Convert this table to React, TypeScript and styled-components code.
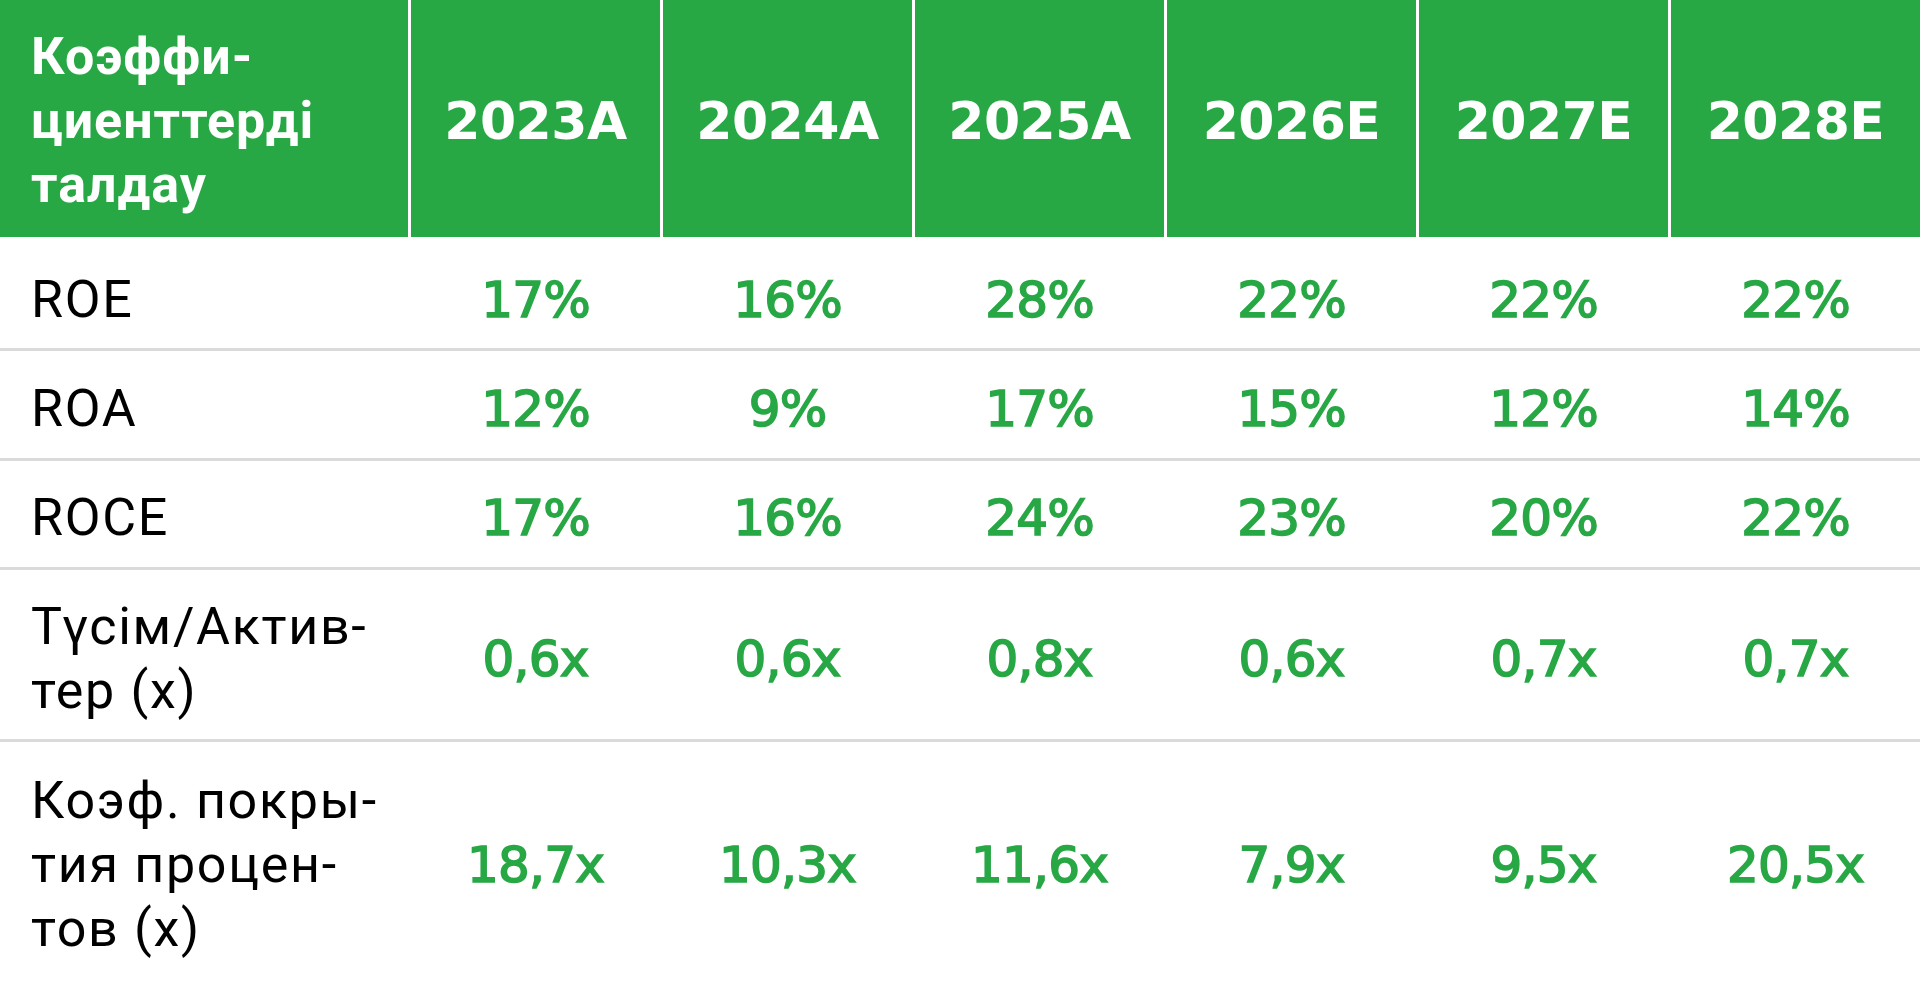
import React from "react";
import styled, { createGlobalStyle } from "styled-components";

const GlobalStyle = createGlobalStyle`
  html, body {
    margin: 0;
    padding: 0;
    background: #ffffff;
  }
  body {
    width: 1920px;
    height: 983px;
    overflow: hidden;
    font-family: "Roboto", "Liberation Sans", sans-serif;
  }
  * { box-sizing: border-box; }
`;

const GREEN = "#28a745";

const Table = styled.div`
  width: 1920px;
  display: flex;
  flex-direction: column;
`;

const Grid = styled.div<{ $h: number; $shift?: number; $line?: boolean }>`
  display: grid;
  grid-template-columns: 408px repeat(6, 1fr);
  column-gap: 3px;
  height: ${(p) => p.$h}px;
  padding-top: ${(p) => p.$shift ?? 0}px;
  border-bottom: ${(p) => (p.$line ? "3px solid #dadada" : "none")};
  align-items: center;
`;

const HeaderRow = styled(Grid)`
  background: #ffffff;
  align-items: stretch;
`;

const HeadCell = styled.div<{ $first?: boolean }>`
  background: ${GREEN};
  color: #ffffff;
  display: flex;
  align-items: center;
  justify-content: ${(p) => (p.$first ? "flex-start" : "center")};
  padding: 5px 0 0 ${(p) => (p.$first ? "31px" : "0")};
`;

const HeadTitle = styled.div`
  font-family: "Roboto", "Liberation Sans", sans-serif;
  font-weight: 700;
  font-size: 52px;
  line-height: 64px;
  letter-spacing: 1px;
`;

const Year = styled.div`
  font-family: "DejaVu Sans", sans-serif;
  font-weight: 700;
  font-size: 52px;
  letter-spacing: -0.5px;
  line-height: 1;
`;

const Label = styled.div`
  padding-left: 31px;
  font-family: "Roboto", "Liberation Sans", sans-serif;
  font-weight: 400;
  font-size: 52px;
  line-height: 64px;
  letter-spacing: 1.7px;
  color: #000000;
`;

const Value = styled.div`
  text-align: center;
  font-family: "DejaVu Sans", sans-serif;
  font-weight: 400;
  font-size: 50px;
  line-height: 64px;
  letter-spacing: -0.8px;
  color: ${GREEN};
  -webkit-text-stroke: 1.6px ${GREEN};
`;

const years = ["2023A", "2024A", "2025A", "2026E", "2027E", "2028E"];

type Row = { label: React.ReactNode; values: string[]; h: number; shift: number; line: boolean };

const rows: Row[] = [
  { label: "ROE", values: ["17%", "16%", "28%", "22%", "22%", "22%"], h: 114, shift: 14, line: true },
  { label: "ROA", values: ["12%", "9%", "17%", "15%", "12%", "14%"], h: 110, shift: 8, line: true },
  { label: "ROCE", values: ["17%", "16%", "24%", "23%", "20%", "22%"], h: 109, shift: 7, line: true },
  {
    label: (
      <>
        Түсім/Актив-
        <br />
        тер (х)
      </>
    ),
    values: ["0,6x", "0,6x", "0,8x", "0,6x", "0,7x", "0,7x"],
    h: 172,
    shift: 8,
    line: true,
  },
  {
    label: (
      <>
        Коэф. покры-
        <br />
        тия процен-
        <br />
        тов (х)
      </>
    ),
    values: ["18,7x", "10,3x", "11,6x", "7,9x", "9,5x", "20,5x"],
    h: 241,
    shift: 4,
    line: false,
  },
];

export default function App() {
  return (
    <>
      <GlobalStyle />
      <Table>
        <HeaderRow $h={237}>
          <HeadCell $first>
            <HeadTitle>
              Коэффи-
              <br />
              циенттерді
              <br />
              талдау
            </HeadTitle>
          </HeadCell>
          {years.map((y) => (
            <HeadCell key={y}>
              <Year>{y}</Year>
            </HeadCell>
          ))}
        </HeaderRow>
        {rows.map((r, i) => (
          <Grid key={i} $h={r.h} $shift={r.shift} $line={r.line}>
            <Label>{r.label}</Label>
            {r.values.map((v, j) => (
              <Value key={j}>{v}</Value>
            ))}
          </Grid>
        ))}
      </Table>
    </>
  );
}
